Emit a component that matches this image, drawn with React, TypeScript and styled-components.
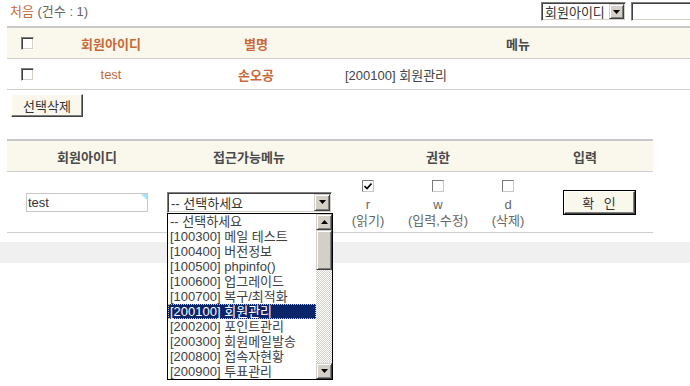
import styled, { createGlobalStyle } from "styled-components";

const BROWN = "#c8693a";
const CREAM = "#faf8ec";
const LINE = "#cfcfcf";
const FACE = "#d4d0c8";

const GlobalStyle = createGlobalStyle`
    html, body {
        margin: 0;
        padding: 0;
        background: #fff;
        overflow: hidden;
    }
    body {
        font-family: "Liberation Sans", "Noto Sans CJK KR", sans-serif;
        font-size: 13px;
        color: #555;
    }
`;

const Page = styled.div`
    width: 690px;
    height: 386px;
    overflow: hidden;
`;

const Content = styled.div`
    padding-left: 7px;
`;

const TopBar = styled.div`
    display: flex;
    align-items: flex-start;
    justify-content: space-between;
    width: 700px;
    height: 26px;
    padding-top: 2px;
    box-sizing: border-box;
`;

const Count = styled.div`
    line-height: 19px;
    padding-left: 3px;
    color: #666;
`;

const HomeLink = styled.a`
    color: ${BROWN};
    text-decoration: none;
`;

const SearchGroup = styled.div`
    display: flex;
    gap: 5px;
`;

// classic sunken field (select / text box)
const Sunken = styled.div<{ $w: number; $h: number }>`
    position: relative;
    width: ${p => p.$w}px;
    height: ${p => p.$h}px;
    box-sizing: border-box;
    border: 1px solid;
    border-color: #808080 #fff #fff #808080;
    box-shadow: inset 1px 1px 0 #404040, inset -1px -1px 0 ${FACE};
    background: #fff;
    display: flex;
    align-items: stretch;
    padding: 1px;
`;

const SelectLabel = styled.div`
    flex: 1;
    padding-left: 2px;
    display: flex;
    align-items: center;
    color: #333;
    white-space: nowrap;
    overflow: hidden;
`;

const Raised = styled.div<{ $w?: number; $h?: number }>`
    width: ${p => p.$w ?? 16}px;
    height: ${p => (p.$h ? `${p.$h}px` : "auto")};
    box-sizing: border-box;
    background: ${FACE};
    border: 1px solid;
    border-color: ${FACE} #404040 #404040 ${FACE};
    box-shadow: inset 1px 1px 0 #fff, inset -1px -1px 0 #808080;
    display: flex;
    align-items: center;
    justify-content: center;
    flex-shrink: 0;
`;

const Arrow = ({ up }: { up?: boolean }) => (
    <svg width="7" height="4" viewBox="0 0 7 4">
        <polygon points={up ? "0,4 7,4 3.5,0" : "0,0 7,0 3.5,4"} fill="#000" />
    </svg>
);

const TableWrap = styled.div<{ $cols: string; $w: number }>`
    display: grid;
    grid-template-columns: ${p => p.$cols};
    width: ${p => p.$w}px;
    border-top: 2px solid #c8c8c8;
`;

const Head = styled.div<{ $color?: string; $pr?: number }>`
    height: 30px;
    background: ${CREAM};
    border-bottom: 1px solid ${LINE};
    display: flex;
    align-items: center;
    justify-content: center;
    padding-right: ${p => p.$pr ?? 0}px;
    font-weight: bold;
    color: ${p => p.$color ?? "#4a4a4a"};
`;

const Cell = styled.div<{ $h: number; $align?: string; $color?: string; $bold?: boolean }>`
    height: ${p => p.$h}px;
    border-bottom: 1px solid ${LINE};
    display: flex;
    align-items: center;
    justify-content: ${p => p.$align ?? "center"};
    color: ${p => p.$color ?? "#444"};
    font-weight: ${p => (p.$bold ? "bold" : "normal")};
    position: relative;
`;

const MenuText = styled.span`
    padding-left: 8px;
`;

const Check3D = styled.div`
    width: 13px;
    height: 13px;
    box-sizing: border-box;
    border: 1px solid;
    border-color: #808080 #fff #fff #808080;
    box-shadow: inset 1px 1px 0 #404040, inset -1px -1px 0 ${FACE};
    background: #fff;
`;

const FlatCheck = styled.div`
    width: 12px;
    height: 12px;
    box-sizing: border-box;
    border: 1px solid;
    border-color: #7a7a7a #c8c8c8 #c8c8c8 #7a7a7a;
    background: #fff;
    display: flex;
    align-items: center;
    justify-content: center;
`;

const Button = styled.button<{ $default?: boolean; $w: number }>`
    width: ${p => p.$w}px;
    height: 23px;
    box-sizing: border-box;
    padding: 0;
    font: inherit;
    color: #333;
    background: ${CREAM};
    border: 1px solid;
    border-color: #fff #404040 #404040 #fff;
    box-shadow: inset -1px -1px 0 #808080;
    outline: ${p => (p.$default ? "1px solid #000" : "none")};
    word-spacing: 6px;
`;

const ButtonRow = styled.div`
    padding: 4px 0 0 4px;
    height: 23px;
    margin-bottom: 22px;
`;

const TextBox = styled.div`
    position: relative;
    width: 122px;
    height: 19px;
    box-sizing: border-box;
    border: 1px solid #c8c8c8;
    padding-left: 1px;
    display: flex;
    align-items: center;
    color: #333;

    &::after {
        content: "";
        position: absolute;
        top: 0;
        right: 0;
        border-top: 6px solid #a8e4f8;
        border-left: 6px solid transparent;
    }
`;

const Perms = styled.div`
    display: flex;
    justify-content: center;
    align-items: flex-start;
    padding-top: 8px;
    height: 52px;
    border-bottom: 1px solid ${LINE};
`;

const Perm = styled.div`
    width: 70px;
    display: flex;
    flex-direction: column;
    align-items: center;
    color: #666;
    line-height: 16px;

    & > div:first-child {
        margin-bottom: 5px;
    }
`;

const SelectHolder = styled.div`
    position: relative;
`;

const ListBox = styled.div`
    position: absolute;
    top: 100%;
    left: 0;
    width: 166px;
    height: 167px;
    box-sizing: border-box;
    border: 1px solid #000;
    background: #fff;
    display: flex;
    z-index: 5;
`;

const Options = styled.div`
    flex: 1;
    display: flex;
    flex-direction: column;
    overflow: hidden;
`;

const Option = styled.div<{ $active?: boolean }>`
    height: 15px;
    line-height: 13px;
    box-sizing: border-box;
    padding-left: 1px;
    white-space: nowrap;
    color: ${p => (p.$active ? "#fff" : "#404040")};
    background: ${p => (p.$active ? "#0a246a" : "transparent")};
    border: 1px ${p => (p.$active ? "dotted #e8c27a" : "solid transparent")};
`;

const ScrollBar = styled.div`
    width: 16px;
    display: flex;
    flex-direction: column;
`;

const Track = styled.div`
    flex: 1;
    background-color: #fff;
    background-image: repeating-conic-gradient(${FACE} 0 25%, #fff 0 50%);
    background-size: 2px 2px;
`;

const Band = styled.div`
    margin-top: 9px;
    height: 21px;
    background: #f0f0f0;
`;

const OPTIONS = [
    "-- 선택하세요",
    "[100300] 메일 테스트",
    "[100400] 버전정보",
    "[100500] phpinfo()",
    "[100600] 업그레이드",
    "[100700] 복구/최적화",
    "[200100] 회원관리",
    "[200200] 포인트관리",
    "[200300] 회원메일발송",
    "[200800] 접속자현황",
    "[200900] 투표관리",
];

const PERMS = [
    { key: "r", label: "(읽기)", checked: true },
    { key: "w", label: "(입력,수정)", checked: false },
    { key: "d", label: "(삭제)", checked: false },
];

export default function App() {
    return (
        <Page>
            <GlobalStyle />
            <Content>
                <TopBar>
                    <Count>
                        <HomeLink href="#">처음</HomeLink> (건수 : 1)
                    </Count>
                    <SearchGroup>
                        <Sunken $w={85} $h={19}>
                            <SelectLabel>회원아이디</SelectLabel>
                            <Raised $w={15}>
                                <Arrow />
                            </Raised>
                        </Sunken>
                        <Sunken $w={76} $h={19} />
                    </SearchGroup>
                </TopBar>

                <TableWrap $cols="40px 128px 162px 362px" $w={692}>
                    <Head>
                        <Check3D />
                    </Head>
                    <Head $color={BROWN}>회원아이디</Head>
                    <Head $color={BROWN}>별명</Head>
                    <Head>메뉴</Head>

                    <Cell $h={30}>
                        <Check3D />
                    </Cell>
                    <Cell $h={30} $color={BROWN}>test</Cell>
                    <Cell $h={30} $color={BROWN} $bold>손오공</Cell>
                    <Cell $h={30} $align="flex-start">
                        <MenuText>[200100] 회원관리</MenuText>
                    </Cell>
                </TableWrap>

                <ButtonRow>
                    <Button $w={72}>선택삭제</Button>
                </ButtonRow>

                <TableWrap $cols="160px 164px 214px 108px" $w={646}>
                    <Head>회원아이디</Head>
                    <Head>접근가능메뉴</Head>
                    <Head>권한</Head>
                    <Head $pr={28}>입력</Head>

                    <Cell $h={60}>
                        <TextBox>test</TextBox>
                    </Cell>
                    <Cell $h={60} $align="flex-start">
                        <SelectHolder>
                            <Sunken $w={165} $h={21}>
                                <SelectLabel>-- 선택하세요</SelectLabel>
                                <Raised $w={16}>
                                    <Arrow />
                                </Raised>
                            </Sunken>
                            <ListBox>
                                <Options>
                                    {OPTIONS.map((o, i) => (
                                        <Option key={o} $active={i === 6}>
                                            {o}
                                        </Option>
                                    ))}
                                </Options>
                                <ScrollBar>
                                    <Raised $h={16}>
                                        <Arrow up />
                                    </Raised>
                                    <Raised $h={40} />
                                    <Track />
                                    <Raised $h={16}>
                                        <Arrow />
                                    </Raised>
                                </ScrollBar>
                            </ListBox>
                        </SelectHolder>
                    </Cell>
                    <Perms>
                        {PERMS.map(p => (
                            <Perm key={p.key}>
                                <FlatCheck>
                                    {p.checked && (
                                        <svg width="8" height="7" viewBox="0 0 8 7">
                                            <path
                                                d="M0.5 3 L3 5.5 L7.5 0.5"
                                                stroke="#000"
                                                strokeWidth="1.6"
                                                fill="none"
                                            />
                                        </svg>
                                    )}
                                </FlatCheck>
                                <span>{p.key}</span>
                                <span>{p.label}</span>
                            </Perm>
                        ))}
                    </Perms>
                    <Cell $h={60}>
                        <Button $w={71} $default>
                            확 인
                        </Button>
                    </Cell>
                </TableWrap>
            </Content>
            <Band />
        </Page>
    );
}
